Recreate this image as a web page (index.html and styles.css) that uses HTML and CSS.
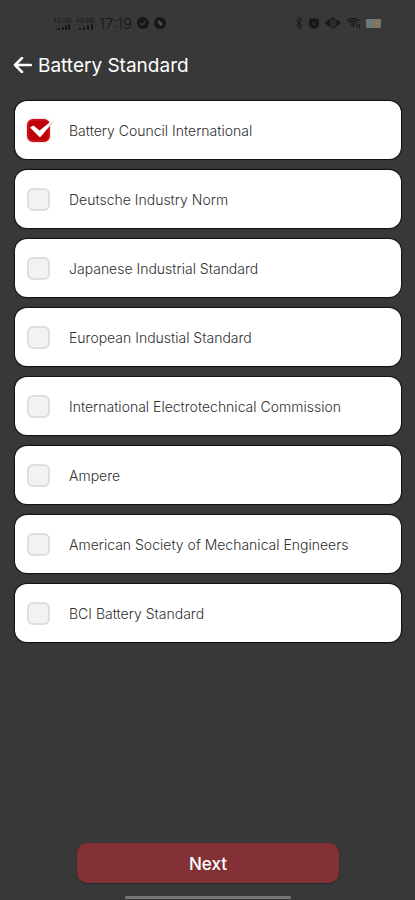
FILE: index.html
```html
<!DOCTYPE html>
<html lang="en">

<head>
    <meta charset="UTF-8">
    <meta name="viewport" content="width=device-width, initial-scale=1.0">
    <title>Battery Standard</title>
    <link rel="stylesheet" href="styles.css">
</head>

<body>
    <div class="status-bar">
        <div class="status-left">
            <div class="signal">
                <span>4G HD</span>
                <svg width="18" height="6" viewBox="0 0 18 6"><path d="M3 5v1M6 4v2M10 3v3M13 1v5M16 0v6" stroke="currentColor" stroke-width="2"/></svg>
            </div>
            <div class="signal">
                <span>4G HD</span>
                <svg width="18" height="6" viewBox="0 0 18 6"><path d="M4 4v2M8 3v3M12 1v5M16 0v6" stroke="currentColor" stroke-width="2"/></svg>
            </div>
            <span class="time">17:19</span>
            <svg width="12" height="12" viewBox="0 0 12 12"><circle cx="6" cy="6" r="6" fill="currentColor"/><path d="M3 6l2 2 4-4" fill="none" stroke="#383838" stroke-width="1.5"/></svg>
            <svg width="12" height="12" viewBox="0 0 12 12"><circle cx="6" cy="6" r="6" fill="currentColor"/><path d="M4 2.500C5 5 9 4 8.500 7.500L7 9.500C6 7.500 3 7 4 2.500z" fill="#4a4a4a"/></svg>
        </div>
        <div class="status-right">
            <svg width="8" height="12" viewBox="0 0 8 12"><path d="M1 3l6 6-3 2.500V.5L7 3 1 9" fill="none" stroke="currentColor"/></svg>
            <svg width="12" height="12" viewBox="0 0 12 12"><circle cx="6" cy="6.500" r="3.500" fill="none" stroke="currentColor" stroke-width="3.500"/><path d="M1 3l2.500-2M11 3L8.500 1M6 4.500v2h2" fill="none" stroke="currentColor"/></svg>
            <svg width="16" height="12" viewBox="0 0 16 12"><path d="M1 6l2-2v4zM15 6l-2-2v4zM4 4l4-3 4 3v4l-4 3-4-3z" fill="none" stroke="currentColor" stroke-width="1.200"/><path d="M6 4v4M8 3v6M10 4v4" stroke="currentColor" stroke-width=".8"/></svg>
            <svg width="15" height="12" viewBox="0 0 15 12"><path d="M1 3.500q6-4 12 0M3 5.500q4-3 8 0M5 7.500q2-1.500 4 0" fill="none" stroke="currentColor" stroke-width="1.500"/><path d="M5.500 8.500h3L7 10.500z" fill="currentColor"/><path d="M11 6v5M13.500 7v4" stroke="currentColor"/></svg>
            <svg width="15" height="9" viewBox="0 0 15 9"><rect width="15" height="9" rx="1" fill="#6f7878"/><path d="M9 0h5v9H8z" fill="#7d7363"/><path d="M11 1L8.500 5H11l-1 3 3-4h-2.500z" fill="#a87c3e"/></svg>
        </div>
    </div>

    <header class="header">
        <a href="#" class="back" aria-label="Back">
            <svg width="19" height="16" viewBox="0 0 19 16"><path d="M18 8H2M9 1L2 8l7 7" fill="none" stroke="#ffffff" stroke-width="2.500" stroke-linecap="round" stroke-linejoin="round"/></svg>
        </a>
        <h1>Battery Standard</h1>
    </header>

    <form class="form">
        <div class="list">
            <label class="item">
                <span class="check">
                    <input type="checkbox" name="standard" value="bci" checked>
                    <svg class="tick" width="28" height="24" viewBox="0 0 28 24"><path d="M3 8.500l3.500-2 6 5L22 4l5.500-2.500L13 18.500z" fill="#ffffff"/><path d="M22.500 5L27.500 1.500 22.500 8z" fill="#d9d4d4"/></svg>
                </span>
                <span>Battery Council International</span>
            </label>
            <label class="item">
                <span class="check"><input type="checkbox" name="standard" value="din"></span>
                <span>Deutsche Industry Norm</span>
            </label>
            <label class="item">
                <span class="check"><input type="checkbox" name="standard" value="jis"></span>
                <span>Japanese Industrial Standard</span>
            </label>
            <label class="item">
                <span class="check"><input type="checkbox" name="standard" value="en"></span>
                <span>European Industial Standard</span>
            </label>
            <label class="item">
                <span class="check"><input type="checkbox" name="standard" value="iec"></span>
                <span>International Electrotechnical Commission</span>
            </label>
            <label class="item">
                <span class="check"><input type="checkbox" name="standard" value="ampere"></span>
                <span>Ampere</span>
            </label>
            <label class="item">
                <span class="check"><input type="checkbox" name="standard" value="asme"></span>
                <span>American Society of Mechanical Engineers</span>
            </label>
            <label class="item">
                <span class="check"><input type="checkbox" name="standard" value="bci-standard"></span>
                <span>BCI Battery Standard</span>
            </label>
        </div>
        <button type="button" class="next">Next</button>
    </form>
    <div class="home-bar"></div>
</body>

</html>
```

FILE: styles.css
```css
* {
    box-sizing: border-box;
}

body {
    font-family: Inter, Roboto, sans-serif;
    margin: 0;
    min-height: 100vh;
    background-color: #383838;
    display: flex;
    flex-direction: column;
}

svg {
    display: block;
    flex-shrink: 0;
}

.status-bar {
    display: flex;
    justify-content: space-between;
    height: 46px;
    padding: 0 34px 0 53px;
    color: #171717;
}

.status-left,
.status-right {
    display: flex;
    align-items: center;
    gap: 5px;
}

.signal {
    width: 18px;
    font-size: 6px;
    line-height: 7px;
    white-space: nowrap;
}

.time {
    font-size: 15px;
    font-weight: 300;
}

.header {
    display: flex;
    align-items: center;
    gap: 6px;
    height: 38px;
    padding: 0 13px;
}

h1 {
    margin: 0;
    color: #ffffff;
    font-size: 19px;
    font-weight: 400;
}

.form {
    flex: 1;
    display: flex;
    flex-direction: column;
    padding: 17px 14px 0 15px;
}

.list {
    display: flex;
    flex-direction: column;
    gap: 11px;
}

.item {
    display: flex;
    align-items: center;
    gap: 19px;
    height: 58px;
    padding: 0 12px;
    border-radius: 12px;
    background: #ffffff;
    box-shadow: 0 0 1px 1px #111111;
    color: #303030;
    font-size: 14px;
    font-weight: 300;
}

.check {
    position: relative;
    width: 23px;
}

input {
    appearance: none;
    display: block;
    width: 23px;
    height: 23px;
    margin: 0;
    border: 2px solid #dedede;
    border-radius: 6px;
    background: #f2f2f2;
}

input:checked {
    border-color: #c81018;
    background: #c00008;
    box-shadow: 0 0 2px #f0a0a0;
}

.tick {
    position: absolute;
    top: 0;
    left: 0;
    display: none;
}

input:checked + .tick {
    display: block;
}

.next {
    width: 68%;
    height: 40px;
    margin: auto auto 0;
    padding: 2px 0 0;
    border: none;
    border-radius: 10px;
    background-color: #833136;
    box-shadow: 0 1px 2px #2a2a2a;
    color: #ffffff;
    font-family: inherit;
    font-size: 17px;
    font-weight: 500;
    cursor: pointer;
}

.home-bar {
    width: 40%;
    height: 3px;
    margin: 13px auto 1px;
    border-radius: 2px;
    background: #777777;
}
```
